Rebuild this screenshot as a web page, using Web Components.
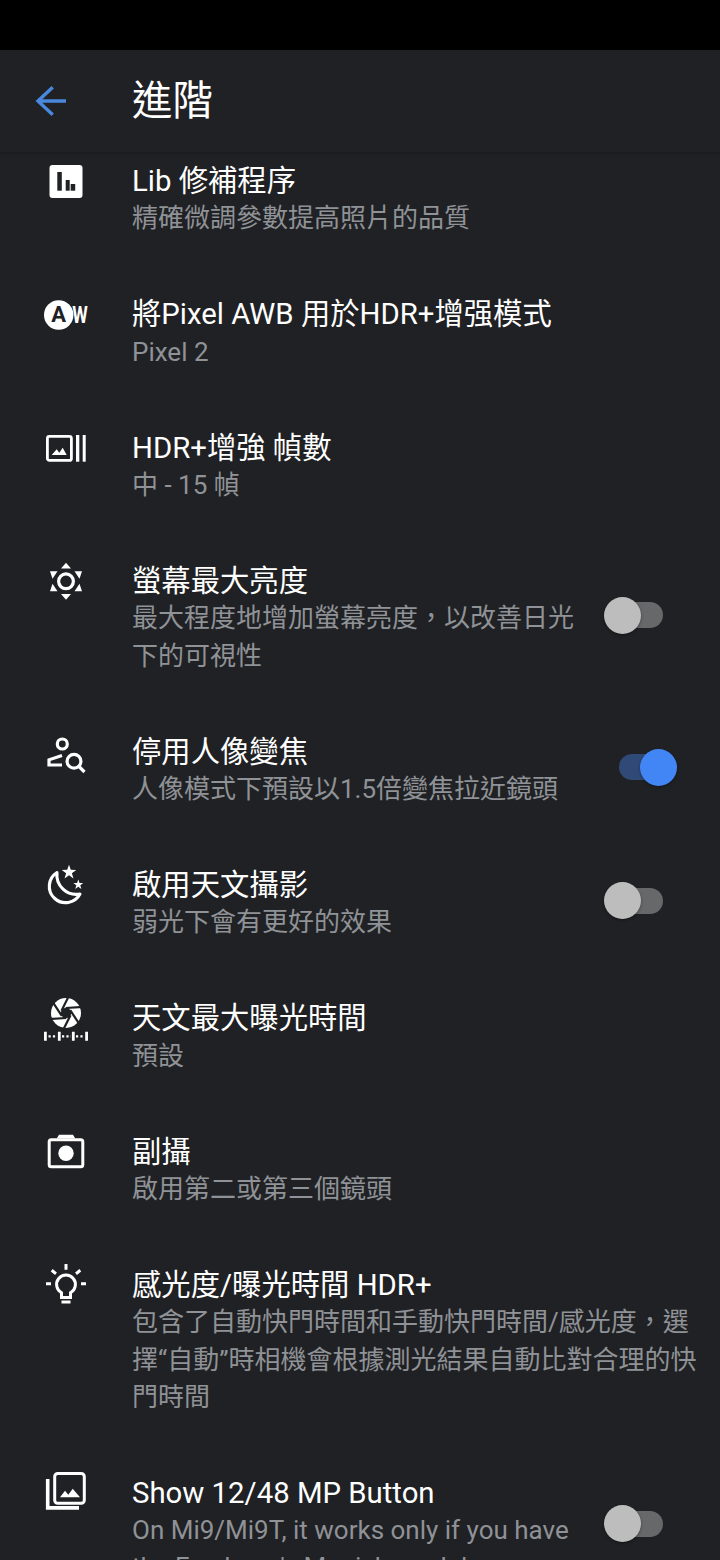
<!DOCTYPE html>
<html lang="zh-Hant">
<head>
<meta charset="utf-8">
<title>進階</title>
<style>
  html, body {
    margin: 0;
    height: 1560px;
    overflow: hidden;
    background: #000;
    font-family: Roboto, "Noto Sans CJK TC", sans-serif;
  }
</style>
</head>
<body>
<settings-screen>
  <app-bar slot="bar">進階</app-bar>

  <setting-row>
    <svg slot="icon" viewBox="0 0 44 44">
      <rect x="5.5" y="5" width="33" height="33" rx="3" fill="#fff"/>
      <rect x="13.3" y="12" width="4.5" height="18.7" fill="#202124"/>
      <rect x="21.7" y="20" width="4" height="10.7" fill="#202124"/>
      <rect x="26.7" y="24" width="4.5" height="6.7" fill="#202124"/>
    </svg>
    <span slot="title">Lib 修補程序</span>
    <span slot="sub">精確微調參數提高照片的品質</span>
  </setting-row>

  <setting-row>
    <svg slot="icon" viewBox="0 0 44 44">
      <circle cx="14.7" cy="22" r="14.7" fill="#fff"/>
      <text x="14.7" y="29.3" text-anchor="middle" font-size="22" font-weight="700" font-family="Roboto" fill="#202124">A</text>
      <text x="28.3" y="30" font-size="24" font-weight="700" font-family="Roboto" fill="#fff" textLength="15.5" lengthAdjust="spacingAndGlyphs">W</text>
    </svg>
    <span slot="title">將Pixel AWB 用於HDR+增强模式</span>
    <span slot="sub">Pixel 2</span>
  </setting-row>

  <setting-row>
    <svg slot="icon" viewBox="0 0 44 44" fill="#fff">
      <rect x="3.4" y="10.4" width="24" height="24" rx="2" fill="none" stroke="#fff" stroke-width="2.8"/>
      <rect x="32" y="9" width="3.3" height="26.7"/>
      <rect x="38.7" y="9" width="3" height="26.7"/>
      <path d="M7.7 29 12.7 23.3 15.3 26.7 18.7 21.7 22.7 29Z"/>
    </svg>
    <span slot="title">HDR+增強 幀數</span>
    <span slot="sub">中 - 15 幀</span>
  </setting-row>

  <setting-row>
    <svg slot="icon" viewBox="0 0 44 44" fill="#fff">
      <circle cx="22" cy="22.3" r="7.4" fill="none" stroke="#fff" stroke-width="3.2"/>
      <g transform="translate(22 22.3)">
        <path d="M0-18.5-5-12.7H5Z"/>
        <path d="M0 18.5-5 12.7H5Z"/>
        <path d="M16-10H8.5L13.5-2.5Z"/>
        <path d="M16 10H8.5L13.5 2.5Z"/>
        <path d="M-16-10H-8.5L-13.5-2.5Z"/>
        <path d="M-16 10H-8.5L-13.5 2.5Z"/>
      </g>
    </svg>
    <span slot="title">螢幕最大亮度</span>
    <span slot="sub">最大程度地增加螢幕亮度，以改善日光下的可視性</span>
    <toggle-switch slot="end"></toggle-switch>
  </setting-row>

  <setting-row>
    <svg slot="icon" viewBox="0 0 44 44" fill="none" stroke="#fff" stroke-width="3.2">
      <circle cx="18.3" cy="14" r="5"/>
      <path d="M18 25.5 5 29.8V35H18"/>
      <circle cx="30" cy="31.3" r="6.9"/>
      <path d="M35 36.5 40.5 42"/>
    </svg>
    <span slot="title">停用人像變焦</span>
    <span slot="sub">人像模式下預設以1.5倍變焦拉近鏡頭</span>
    <toggle-switch slot="end" checked></toggle-switch>
  </setting-row>

  <setting-row>
    <svg slot="icon" viewBox="0 0 44 44">
      <path d="M13 9.5A16.3 16.3 0 1 0 36 31 19.5 19.5 0 0 1 13 9.5Z" fill="none" stroke="#fff" stroke-width="3.1" stroke-linejoin="round"/>
      <polygon transform="translate(25 9.3) scale(7.6)" fill="#fff" points="0,-1 .235,-.324 .951,-.309 .38,.124 .588,.809 0,.4 -.588,.809 -.38,.124 -.951,-.309 -.235,-.324"/>
      <polygon transform="translate(34.3 21.7) scale(5.2)" fill="#fff" points="0,-1 .235,-.324 .951,-.309 .38,.124 .588,.809 0,.4 -.588,.809 -.38,.124 -.951,-.309 -.235,-.324"/>
    </svg>
    <span slot="title">啟用天文攝影</span>
    <span slot="sub">弱光下會有更好的效果</span>
    <toggle-switch slot="end"></toggle-switch>
  </setting-row>

  <setting-row>
    <svg slot="icon" viewBox="0 0 44 44">
      <circle cx="22" cy="16" r="15" fill="#fff"/>
      <g transform="translate(22 16)" stroke="#202124" stroke-width="2.2">
        <path transform="rotate(-3.4)" d="M-2.9-5H2.9L5.8 0 2.9 5H-2.9L-5.8 0Z" fill="#202124" stroke="none"/>
        <path d="M-4.5-2.25 3.6-18.5"/>
        <path transform="rotate(60)" d="M-4.5-2.25 3.6-18.5"/>
        <path transform="rotate(120)" d="M-4.5-2.25 3.6-18.5"/>
        <path transform="rotate(180)" d="M-4.5-2.25 3.6-18.5"/>
        <path transform="rotate(240)" d="M-4.5-2.25 3.6-18.5"/>
        <path transform="rotate(300)" d="M-4.5-2.25 3.6-18.5"/>
      </g>
      <path d="M1.4 34.8V43.8M15.3 34.8V43.8M29.3 34.8V43.8M42.6 34.8V43.8" stroke="#fff" stroke-width="2.8"/>
      <path d="M4.5 39.3H13M18 39.3H27M32 39.3H40.5" stroke="#fff" stroke-width="2.2" stroke-dasharray="2.2 2.2"/>
    </svg>
    <span slot="title">天文最大曝光時間</span>
    <span slot="sub">預設</span>
  </setting-row>

  <setting-row>
    <svg slot="icon" viewBox="0 0 44 44" fill="#fff">
      <rect x="5.2" y="9.8" width="33.6" height="27" rx="2" fill="none" stroke="#fff" stroke-width="3"/>
      <path d="M12.7 8.5 15 4.7H29L31.3 8.5Z"/>
      <circle cx="22" cy="23.3" r="7.7"/>
    </svg>
    <span slot="title">副攝</span>
    <span slot="sub">啟用第二或第三個鏡頭</span>
  </setting-row>

  <setting-row>
    <svg slot="icon" viewBox="0 0 44 44" fill="none" stroke="#fff" stroke-width="3">
      <path d="M17.5 34.5V29.7A9.4 9.4 0 1 1 26.5 29.7V34.5Z"/>
      <path d="M17.5 39H26.5M22 1V6.7M2 20.7H7M37 20.7H42M7.7 7.3 12 10.7M36.3 7.3 32 10.7"/>
    </svg>
    <span slot="title">感光度/曝光時間 HDR+</span>
    <span slot="sub">包含了自動快門時間和手動快門時間/感光度，選擇“自動”時相機會根據測光結果自動比對合理的快門時間</span>
  </setting-row>

  <setting-row>
    <svg slot="icon" viewBox="0 0 44 44" fill="none" stroke="#fff">
      <rect x="10.7" y="2.4" width="29.6" height="29.9" rx="3" stroke-width="3"/>
      <path d="M3.7 8V36.9H35" stroke-width="3.6"/>
      <path d="M16 26.3 21 19.7 24.3 23.7 28.7 17.7 36 26.3Z" fill="#fff" stroke="none"/>
    </svg>
    <span slot="title">Show 12/48 MP Button</span>
    <span slot="sub">On Mi9/Mi9T, it works only if you have the Fazdmen's Magisk module</span>
    <toggle-switch slot="end" style="margin-bottom:14px"></toggle-switch>
  </setting-row>
</settings-screen>

<script>
class SettingsScreen extends HTMLElement {
  constructor () {
    super();
    this.attachShadow({ mode: "open" });
    this.shadowRoot.innerHTML = `
      <style>
        :host {
          display: flex;
          flex-direction: column;
          height: 1560px;
          background: #202124;
          overflow: hidden;
        }
        .status { height: 50px; flex: none; background: #000; }
        .scroll { flex: 1; min-height: 0; overflow: hidden; }
        .list { margin-top: -18.3px; }
      </style>
      <div class="status"></div>
      <slot name="bar"></slot>
      <div class="scroll"><div class="list"><slot></slot></div></div>
    `;
  }
}

class AppBar extends HTMLElement {
  constructor () {
    super();
    this.attachShadow({ mode: "open" });
    this.shadowRoot.innerHTML = `
      <style>
        :host {
          display: flex;
          align-items: center;
          flex: none;
          height: 102px;
          padding-left: 30px;
          background: #202124;
          color: #fff;
          box-shadow: 0 1px 4px rgba(0, 0, 0, .25);
          position: relative;
          z-index: 1;
        }
        svg { width: 44px; height: 44px; margin-right: 58px; }
        h1 { margin: 0; font-size: 40.5px; font-weight: 400; line-height: 56px; }
      </style>
      <svg viewBox="0 0 44 44" fill="none" stroke="#4a88dc" stroke-width="3.4">
        <path d="M8 22H36M22.7 8.3 8 22 22.7 35.7"/>
      </svg>
      <h1><slot></slot></h1>
    `;
  }
}

class SettingRow extends HTMLElement {
  constructor () {
    super();
    this.attachShadow({ mode: "open" });
    this.shadowRoot.innerHTML = `
      <style>
        :host {
          display: flex;
          padding: 29.33px 20px 29.33px 44px;
        }
        .icon { flex: none; width: 88px; height: 44px; margin-top: -3.5px; }
        ::slotted(svg) { display: block; width: 44px; height: 44px; overflow: visible; }
        .text { flex: 1; min-width: 0; line-height: 37.33px; }
        .title { font-size: 29.33px; color: #fff; }
        .sub { font-size: 26px; color: #8f9296; }
        .end { display: flex; align-items: center; flex: none; }
        ::slotted(toggle-switch) { margin-left: 14px; margin-right: 23px; }
      </style>
      <div class="icon"><slot name="icon"></slot></div>
      <div class="text">
        <div class="title"><slot name="title"></slot></div>
        <div class="sub"><slot name="sub"></slot></div>
      </div>
      <div class="end"><slot name="end"></slot></div>
    `;
  }
}

class ToggleSwitch extends HTMLElement {
  constructor () {
    super();
    this.attachShadow({ mode: "open" });
    this.shadowRoot.innerHTML = `
      <style>
        :host {
          display: flex;
          position: relative;
          width: 73px;
          height: 37px;
          margin-bottom: 7px;
        }
        :host([checked]) { justify-content: flex-end; }
        .track {
          position: absolute;
          left: 15px;
          top: 5.5px;
          width: 44px;
          height: 26px;
          border-radius: 13px;
          background: #666869;
        }
        :host([checked]) .track { background: #304a78; }
        .thumb {
          position: relative;
          width: 37px;
          height: 37px;
          border-radius: 50%;
          background: #bdbdbd;
          box-shadow: 0 1px 3px rgba(0, 0, 0, .4);
        }
        :host([checked]) .thumb { background: #4285f4; }
      </style>
      <div class="track"></div>
      <div class="thumb"></div>
    `;
  }
}

customElements.define("settings-screen", SettingsScreen);
customElements.define("app-bar", AppBar);
customElements.define("setting-row", SettingRow);
customElements.define("toggle-switch", ToggleSwitch);
</script>
</body>
</html>
